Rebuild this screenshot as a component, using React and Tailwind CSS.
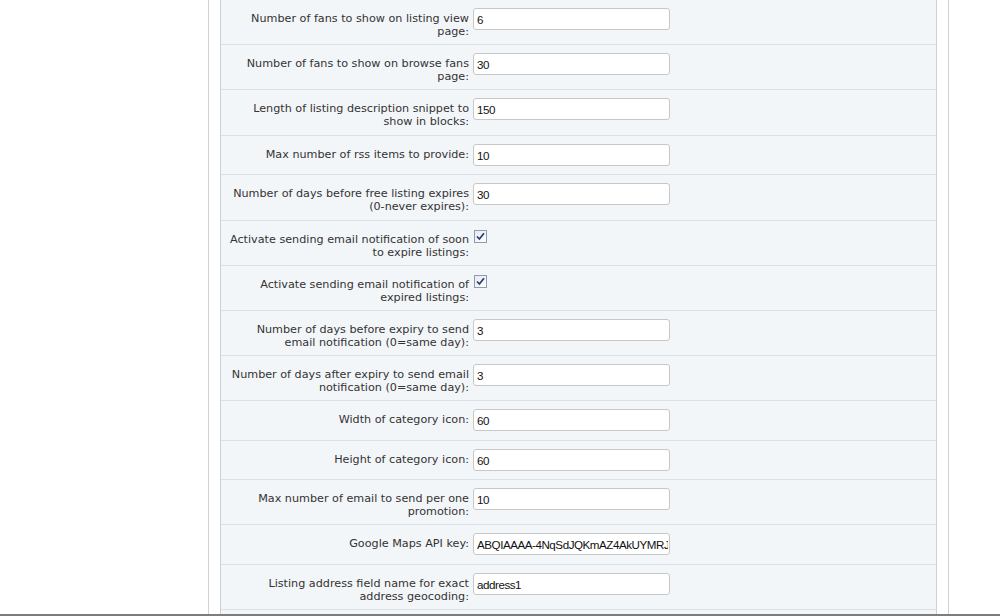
import React from 'react';

const rows = [
    { h: 'h-[45px]', label: ['Number of fans to show on listing view', 'page:'], value: '6' },
    { h: 'h-[45px]', label: ['Number of fans to show on browse fans', 'page:'], value: '30' },
    { h: 'h-[46px]', label: ['Length of listing description snippet to', 'show in blocks:'], value: '150' },
    { h: 'h-[39px]', label: ['Max number of rss items to provide:'], value: '10' },
    { h: 'h-[46px]', label: ['Number of days before free listing expires', '(0-never expires):'], value: '30' },
    { h: 'h-[45px]', label: ['Activate sending email notification of soon', 'to expire listings:'], check: true },
    { h: 'h-[45px]', label: ['Activate sending email notification of', 'expired listings:'], check: true },
    { h: 'h-[45px]', label: ['Number of days before expiry to send', 'email notification (0=same day):'], value: '3' },
    { h: 'h-[45px]', label: ['Number of days after expiry to send email', 'notification (0=same day):'], value: '3' },
    { h: 'h-[40px]', label: ['Width of category icon:'], value: '60' },
    { h: 'h-[39px]', label: ['Height of category icon:'], value: '60' },
    { h: 'h-[45px]', label: ['Max number of email to send per one', 'promotion:'], value: '10' },
    { h: 'h-[40px]', label: ['Google Maps API key:'], value: 'ABQIAAAA-4NqSdJQKmAZ4AkUYMRJ3' },
    { h: 'h-[45px]', label: ['Listing address field name for exact', 'address geocoding:'], value: 'address1' },
    { h: 'h-[45px]', label: [''], value: '' },
];

const Checkbox = () => (
    <span className="mt-[1px] ml-[1px] flex h-[13px] w-[13px] items-center justify-center border border-[#8e9bb0] bg-gradient-to-br from-[#e6e9ee] to-white">
        <svg width="9" height="9" viewBox="0 0 9 9">
            <path d="M1 4.5 L3.4 7 L8 1.2" fill="none" stroke="#2a3f77" strokeWidth="1.8" />
        </svg>
    </span>
);

const Row = ({ row }) => (
    <div className={`flex items-start border-b border-[#dce1e7] pt-[8px] ${row.h}`}>
        <div className="w-[252px] shrink-0 pt-[4px] pr-[4px] text-right text-[11.2px] leading-[13px] text-[#333]">
            {row.label.map((l, i) => (
                <div key={i} className="whitespace-nowrap">{l}</div>
            ))}
        </div>
        {row.check ? (
            <Checkbox />
        ) : (
            <input
                readOnly
                value={row.value}
                className="h-[22px] w-[197px] overflow-hidden rounded-[3px] border border-[#c8c8c8] bg-white pl-[3px] pr-[1px] text-[11.6px] tracking-[-0.45px] text-[#111] outline-none"
                style={{ fontFamily: '"Liberation Sans", Arial, sans-serif' }}
            />
        )}
    </div>
);

export default function App() {
    return (
        <div className="flex h-[616px] w-[1000px] flex-col overflow-hidden bg-white" style={{ fontFamily: '"DejaVu Sans", Verdana, sans-serif' }}>
            <div className="flex-1 overflow-hidden">
                <div className="ml-[208px] h-full w-[741px] border-x border-[#d2d2d2] px-[11px]">
                    <div className="h-full border-x border-[#cdd1d6] bg-[#f3f6f9]">
                        {rows.map((row, i) => (
                            <Row key={i} row={row} />
                        ))}
                    </div>
                </div>
            </div>
            <div className="h-[2px] bg-[#7d7d7d]"></div>
        </div>
    );
}
